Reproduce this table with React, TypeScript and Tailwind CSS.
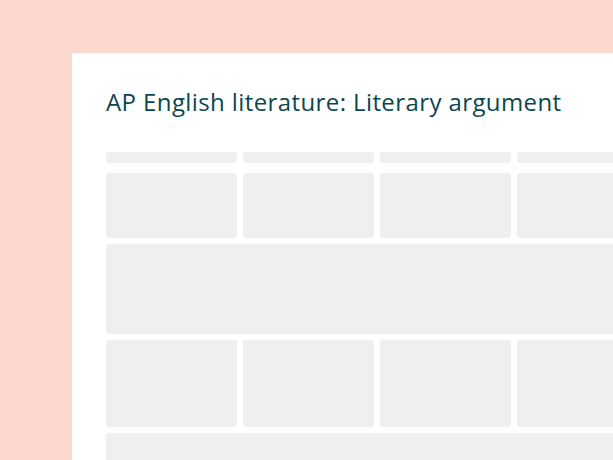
import React from "react";

const Cell = ({ className = "" }: { className?: string }) => (
  <div className={`rounded-[3px] bg-[#efefef] ${className}`} />
);

export default function App() {
  const cols = [0, 1, 2, 3, 4];
  return (
    <div className="w-[613px] h-[460px] overflow-hidden bg-[#fcd8cf] pl-[72px] pt-[53px]">
      <div className="h-full w-[600px] bg-white pl-[34px] pt-[33px] overflow-hidden">
        <h1
          className="text-[24px] leading-[32px] font-medium text-[#0c4750] whitespace-nowrap tracking-[0.4px]"
          style={{ fontFamily: "'Open Sans', 'Noto Sans', sans-serif" }}
        >
          AP English literature: Literary argument
        </h1>
        <div className="mt-[34px] w-[680px] grid grid-cols-[repeat(5,131px)] gap-x-[6px]">
          {cols.map((c) => (
            <Cell key={`h${c}`} className="h-[11px]" />
          ))}
        </div>
        <div className="mt-[10px] w-[680px] grid grid-cols-[repeat(5,131px)] gap-x-[6px] gap-y-[6px]">
          {cols.map((c) => (
            <Cell key={`a${c}`} className="h-[65px]" />
          ))}
          <Cell className="col-span-5 h-[90px]" />
          {cols.map((c) => (
            <Cell key={`b${c}`} className="h-[87px]" />
          ))}
          <Cell className="col-span-5 h-[90px]" />
        </div>
      </div>
    </div>
  );
}
